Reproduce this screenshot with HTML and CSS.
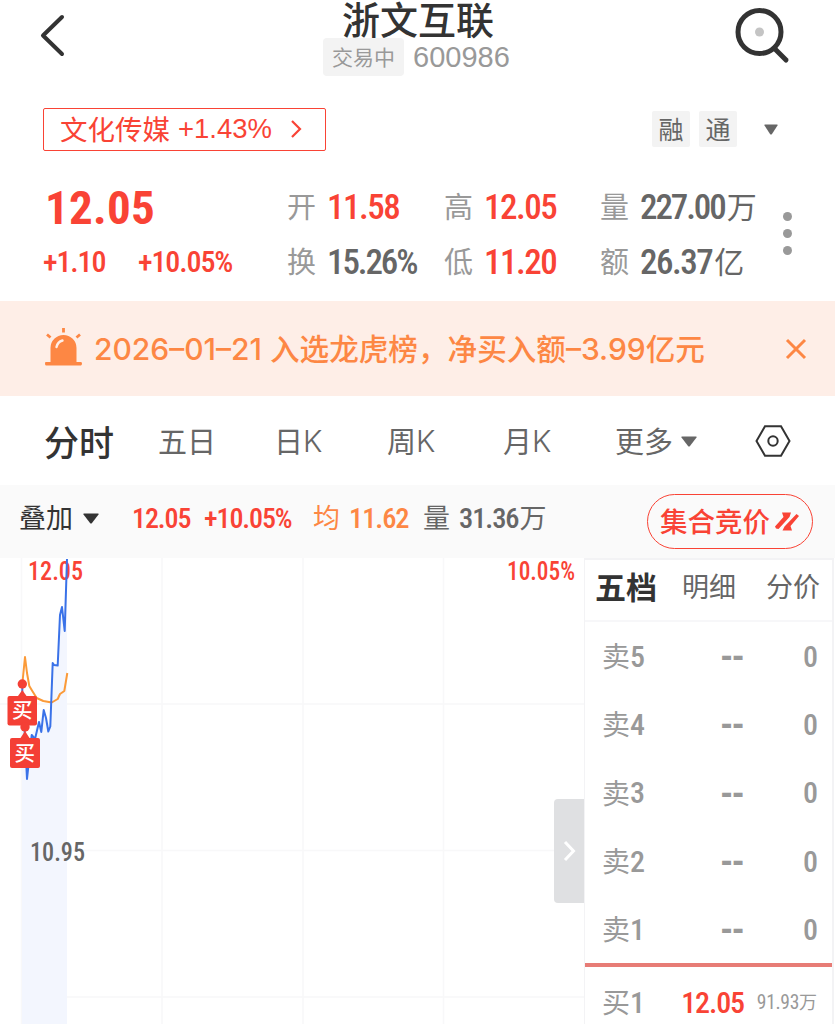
FILE: index.html
```html
<!DOCTYPE html>
<html lang="zh-CN">
<head>
  <meta charset="UTF-8">
  <title>浙文互联 600986</title>
  <meta name="viewport" content="width=device-width, initial-scale=1">
  <link rel="stylesheet" href="styles.css">
</head>
<body>
  <header class="header">
    <svg class="back" width="28" height="44" viewBox="0 0 28 44"><path d="M23 4 4 22.500 23 41" /></svg>
    <div class="title-box">
      <h1 class="title">浙文互联</h1>
      <div class="sub"><span class="state">交易中</span><span class="code">600986</span></div>
    </div>
    <svg class="search" width="58" height="58" viewBox="0 0 58 58">
      <circle class="ring" cx="25.500" cy="26" r="21.500" />
      <path class="ring" d="M41 43 52 54" />
      <circle class="dot" cx="25.500" cy="26" r="4.500" />
    </svg>
  </header>

  <div class="tag-row">
    <a class="sector"><span class="sector-name">文化传媒</span><span class="sector-num">+1.43%</span>
      <svg width="12" height="20" viewBox="0 0 12 20"><path d="M2 2 10 10 2 18" /></svg>
    </a>
    <span class="mark">融</span>
    <span class="mark">通</span>
    <svg class="tri" width="14" height="11" viewBox="0 0 14 11"><path d="M1 .500H13Q14 .500 13.500 1.500L8 10Q7 11 6 10L.500 1.500Q0 .500 1 .500Z" /></svg>
  </div>

  <!-- 行情数据 -->
  <section class="quote">
    <div class="price num red">12.05</div>
    <div class="cell"><span class="label">开</span><b class="num red">11.58</b></div>
    <div class="cell"><span class="label">高</span><b class="num red">12.05</b></div>
    <div class="cell"><span class="label">量</span><b class="num tight">227.00</b><span class="unit">万</span></div>
    <div class="change"><span class="num red">+1.10</span><span class="num red">+10.05%</span></div>
    <div class="cell"><span class="label">换</span><b class="num tight">15.26%</b></div>
    <div class="cell"><span class="label">低</span><b class="num red">11.20</b></div>
    <div class="cell"><span class="label">额</span><b class="num">26.37</b><span class="unit">亿</span></div>
    <div class="dots"><i></i><i></i><i></i></div>
  </section>

  <div class="notice">
    <svg class="alarm" width="37" height="39" viewBox="0 0 37 39">
      <path class="lamp" d="M5.500 34V20a13 13 0 0 1 26 0v14H36q1 0 1 1.500T36 37.500H1Q0 37.500 0 35.500T1 34Z" />
      <path class="ray" d="M18.500 0v4.500M2 6.500 5.500 9.500M35 6.500 31.500 9.500" />
      <path class="shine" d="M11.500 19q1-5 6-6.500" />
    </svg>
    <span class="notice-text"><span class="lat">2026–01–21 </span>入选龙虎榜，净买入额<span class="lat">–3.99</span>亿元</span>
    <svg class="close" width="22" height="22" viewBox="0 0 22 22"><path d="M2 2 20 20M20 2 2 20" /></svg>
  </div>

  <nav class="tabs">
    <span class="active">分时</span>
    <span>五日</span>
    <span>日<i>K</i></span>
    <span>周<i>K</i></span>
    <span>月<i>K</i></span>
    <span>更多<svg class="tri" width="16" height="11" viewBox="0 0 16 11"><path d="M1 .500H15Q16 .500 15.500 1.500L9 10Q8 11 7 10L.500 1.500Q0 .500 1 .500Z" /></svg></span>
    <svg class="setting" width="36" height="32" viewBox="0 0 36 32"><path d="M10 1.200H26L34.500 16 26 30.800H10L1.500 16Z" /><circle cx="18" cy="16" r="4.700" /></svg>
  </nav>

  <div class="info-bar">
    <span class="overlay">叠加</span>
    <svg class="tri dark" width="16" height="11" viewBox="0 0 16 11"><path d="M1 .500H15Q16 .500 15.500 1.500L9 10Q8 11 7 10L.500 1.500Q0 .500 1 .500Z" /></svg>
    <span class="num red now">12.05</span>
    <span class="num red pct">+10.05%</span>
    <span class="avg">均</span><span class="num avg-num">11.62</span>
    <span class="vol">量</span><span class="num vol-num">31.36</span><span class="vol-unit">万</span>
    <a class="auction"><span>集合竞价</span>
      <svg width="24" height="20" viewBox="0 0 24 20"><path class="z" d="M7 .500H16L14.500 5 3.500 17 1 16.500 0 14.500 8.500 5Z" /><path class="z" d="M21.500 2 24 4 15.500 14 17 18.500H7.500L9.500 14.500Z" /></svg>
    </a>
  </div>

  <main class="main">
    <div class="chart">
      <svg class="plot" width="584" height="466" viewBox="0 558 584 466">
        <path class="grid" d="M21.500 558V1024M162 558V1024M303 558V1024M443.500 558V1024M0 704H584M21 850.500H584M21 997H584" />
        <path class="area" d="M22 688 27 779 31.700 735 39 722 43.700 710 50 727 52.700 663 57.700 665 60 615 62 607 64.700 631 67 559V1024H22Z" />
        <path class="avg-line" d="M22.300 684 25 657 27 673 29.300 686 32.300 691 36.700 698 43.300 701 51.700 702.500 57.700 699 60 694 64.300 691 67.300 673" />
        <text class="tick red" x="28" y="580" textLength="55" lengthAdjust="spacingAndGlyphs">12.05</text>
        <text class="tick red" x="507" y="580" textLength="68" lengthAdjust="spacingAndGlyphs">10.05%</text>
        <text class="tick" x="30" y="860.500" textLength="55" lengthAdjust="spacingAndGlyphs">10.95</text>
        <path class="price-line" d="M22.300 685V700L24.700 732 27 779 31.700 735 35 739 39 722 41.300 732 43.700 710 46 718 48.300 731.500 50.300 726.500 52.700 663 54 665 57.700 665.500 60 615 62 607 64.700 631 67 559" />
        <g class="buy">
          <circle cx="22.300" cy="684" r="4.700" />
          <path d="M18 696 22.300 690 26.500 696Z" />
          <rect x="7.500" y="696" width="29.500" height="29.500" rx="2" />
          <circle cx="25" cy="727" r="4.700" />
          <path d="M20.500 738 25 731 29.500 738Z" />
          <rect x="10" y="738" width="30" height="30" rx="2" />
          <text x="12" y="718">买</text>
          <text x="14.500" y="760.500">买</text>
        </g>
      </svg>
      <div class="toggle"><svg width="13" height="22" viewBox="0 0 13 22"><path d="M2 2 10.500 11 2 20" /></svg></div>
    </div>

    <!-- 五档盘口 -->
    <aside class="book">
      <div class="book-tabs"><b>五档</b><span>明细</span><span>分价</span></div>
      <div class="row"><span>卖<i class="num">5</i></span><b class="none">--</b><b class="num qty">0</b></div>
      <div class="row"><span>卖<i class="num">4</i></span><b class="none">--</b><b class="num qty">0</b></div>
      <div class="row"><span>卖<i class="num">3</i></span><b class="none">--</b><b class="num qty">0</b></div>
      <div class="row"><span>卖<i class="num">2</i></span><b class="none">--</b><b class="num qty">0</b></div>
      <div class="row"><span>卖<i class="num">1</i></span><b class="none">--</b><b class="num qty">0</b></div>
      <div class="row bid"><span>买<i class="num">1</i></span><b class="num red">12.05</b><span class="small"><i class="num">91.93</i>万</span></div>
    </aside>
  </main>
</body>
</html>
```

FILE: styles.css
```css
* {
  box-sizing: border-box;
}
body {
  margin: 0;
  width: 835px;
  height: 1024px;
  overflow: hidden;
  background: #fff;
  font-family: "Noto Sans CJK SC", sans-serif;
  color: #666;
}
svg {
  display: block;
  flex: none;
}
i {
  font-style: normal;
}
.num {
  font-family: "Roboto Condensed", Roboto, sans-serif;
  font-weight: 500;
  letter-spacing: -1.1px;
}
.red {
  color: #f94335;
}
.tri {
  fill: #666;
}
.tri.dark {
  fill: #333;
}

/* header */
.header {
  height: 88px;
  display: flex;
  justify-content: space-between;
  align-items: flex-start;
  padding: 0 43px 0 39px;
}
.back {
  margin-top: 13px;
  fill: none;
  stroke: #333;
  stroke-width: 4;
  stroke-linecap: round;
  stroke-linejoin: round;
}
.title-box {
  width: 190px;
  margin-left: 35px;
}
.title {
  margin: 0;
  height: 38px;
  line-height: 36px;
  font-size: 38px;
  font-weight: 500;
  color: #333;
  text-align: center;
}
.sub {
  display: flex;
  align-items: center;
  height: 38px;
}
.state {
  width: 81px;
  height: 38px;
  line-height: 36px;
  border-radius: 4px;
  background: #f3f3f3;
  color: #999;
  font-size: 21px;
  text-align: center;
}
.code {
  margin-left: 9px;
  font-family: "Liberation Sans", sans-serif;
  font-size: 29px;
  color: #999;
}
.search {
  margin-top: 6px;
}
.search .ring {
  fill: none;
  stroke: #333;
  stroke-width: 5;
  stroke-linecap: round;
}
.search .dot {
  fill: #c4c4c4;
}

/* sector and marks */
.tag-row {
  display: flex;
  align-items: center;
  height: 82px;
  padding: 0 57px 0 43px;
}
.sector {
  display: flex;
  align-items: center;
  width: 283px;
  height: 43px;
  margin-right: auto;
  padding-left: 16px;
  border: 1.5px solid #f94335;
  border-radius: 2px;
  color: #f94335;
  font-size: 27.500px;
}
.sector-name {
  padding-bottom: 3px;
}
.sector-num {
  margin-left: 8px;
  font-family: "Liberation Sans", sans-serif;
  font-size: 27.500px;
}
.sector svg {
  margin-left: 18px;
  fill: none;
  stroke: #f94335;
  stroke-width: 2.2;
}
.mark {
  width: 38px;
  height: 36px;
  margin-right: 9px;
  line-height: 35px;
  background: #f3f3f3;
  border-radius: 2px;
  font-size: 25px;
  text-align: center;
}
.tag-row .tri {
  margin-left: 18px;
}

/* quote */
.quote {
  display: grid;
  grid-template-columns: 243px 157px 156px 178px 20px;
  grid-template-rows: 55px 55px;
  align-items: center;
  height: 131px;
  padding: 9px 0 0 43px;
}
.price {
  padding: 2px 0 0 2px;
  font-size: 47px;
  font-weight: 700;
  letter-spacing: .3px;
}
.change {
  display: flex;
  font-size: 30px;
}
.change .num {
  letter-spacing: -1.1px;
}
.change .num:first-child {
  width: 95px;
}
.cell {
  display: flex;
  align-items: center;
  padding-left: 1px;
  font-size: 35px;
}
.cell .num {
  padding-top: 1px;
  letter-spacing: -1.5px;
}
.cell .tight {
  letter-spacing: -2.1px;
}
.label {
  width: 40px;
  padding-bottom: 3px;
  font-size: 29px;
  color: #999;
}
.unit {
  margin-left: 2px;
  padding-bottom: 3px;
  font-size: 30px;
}
.dots {
  grid-column: 5;
  grid-row: 1 / 3;
  display: flex;
  flex-direction: column;
  align-items: center;
  gap: 8px;
  padding-bottom: 2px;
}
.dots i {
  width: 9px;
  height: 9px;
  border-radius: 50%;
  background: #999;
}

/* notice */
.notice {
  display: flex;
  align-items: center;
  height: 95px;
  padding: 0 28px 0 45px;
  background: #feeee7;
  color: #fd8744;
}
.alarm {
  margin-bottom: 2px;
}
.notice-text {
  margin-left: 12px;
  padding-bottom: 2px;
  font-size: 29.600px;
  font-weight: 500;
  white-space: pre;
}
.lat {
  font-family: Inter, sans-serif;
  font-size: 30px;
}
.lamp {
  fill: #fd8744;
}
.ray {
  fill: none;
  stroke: #fd8744;
  stroke-width: 2.800;
}
.shine {
  fill: none;
  stroke: #feeee7;
  stroke-width: 2.400;
  stroke-linecap: round;
}
.close {
  margin-left: auto;
  fill: none;
  stroke: #fd8744;
  stroke-width: 3;
}

/* period tabs */
.tabs {
  display: grid;
  grid-template-columns: 114px 116px 113px 116px 112px 140px 36px;
  align-items: center;
  height: 89px;
  padding-left: 44px;
  font-size: 29px;
}
.tabs span {
  display: flex;
  align-items: center;
  padding-bottom: 1px;
}
.tabs i {
  padding-top: 2px;
  font-family: Inter, sans-serif;
  font-size: 30px;
  font-weight: 300;
}
.tabs .active {
  font-size: 35px;
  font-weight: 500;
  color: #333;
}
.tabs .tri {
  margin: 3px 0 0 8px;
}
.setting {
  fill: none;
  stroke: #333;
  stroke-width: 2;
}

/* overlay bar */
.info-bar {
  display: flex;
  align-items: center;
  height: 73px;
  padding: 0 22px 7px 19px;
  background: #fafafa;
  font-size: 27px;
}
.overlay {
  width: 64px;
  padding-bottom: 3px;
  color: #333;
}
.now {
  width: 72px;
  margin-left: 33px;
  font-size: 28px;
}
.pct {
  width: 109px;
  font-size: 28px;
}
.avg {
  width: 36px;
  padding-bottom: 3px;
  color: #fd8744;
}
.avg-num {
  width: 74px;
  color: #fd8744;
  font-size: 28.500px;
}
.vol {
  width: 36px;
  padding-bottom: 3px;
}
.vol-num {
  font-size: 28.500px;
}
.vol-unit {
  padding: 0 0 3px 1px;
}
.auction {
  display: flex;
  align-items: center;
  width: 166px;
  height: 55px;
  margin: 7px 0 0 auto;
  padding-left: 12px;
  border: 1.5px solid #f94335;
  border-radius: 28px;
  color: #f94335;
  font-size: 27.500px;
  font-weight: 500;
}
.auction span {
  padding-bottom: 3px;
}
.auction svg {
  margin-left: 5px;
}
.auction .z {
  fill: #f94335;
}

/* chart and order book */
.main {
  display: flex;
  height: 466px;
}
.chart {
  position: relative;
  width: 584px;
}
.plot {
  overflow: visible;
}
.grid {
  fill: none;
  stroke: #f8f8f9;
  stroke-width: 1.500;
}
.area {
  fill: #f3f6fe;
}
.price-line {
  fill: none;
  stroke: #3a72e8;
  stroke-width: 2;
  stroke-linejoin: round;
}
.avg-line {
  fill: none;
  stroke: #fb9a38;
  stroke-width: 2;
  stroke-linejoin: round;
}
.tick {
  font-family: "Roboto Condensed", Roboto, sans-serif;
  font-size: 25.500px;
  font-weight: 500;
  fill: #666;
}
.tick.red {
  fill: #f94335;
}
.buy {
  fill: #f43f35;
}
.buy text {
  fill: #fff;
  font-size: 20.500px;
  font-weight: 500;
}
.toggle {
  position: absolute;
  right: 0;
  top: 241px;
  display: flex;
  align-items: center;
  justify-content: center;
  width: 30px;
  height: 104px;
  border-radius: 4px 0 0 4px;
  background: #dfe0e2;
}
.toggle path {
  fill: none;
  stroke: #fff;
  stroke-width: 3;
}
.book {
  width: 250px;
  border: 2px solid #f3f3f5;
  border-width: 2px 2px 0 1px;
}
.book-tabs {
  display: flex;
  align-items: center;
  height: 62px;
  padding: 0 0 9px 10px;
  border-bottom: 2px solid #f7f7f9;
  font-size: 27px;
}
.book-tabs b {
  flex: none;
  width: 87px;
  font-size: 31px;
  font-weight: 700;
  color: #333;
}
.book-tabs span {
  flex: none;
  width: 84px;
}
.row {
  display: grid;
  grid-template-columns: 79px 63px 1fr;
  align-items: center;
  height: 68.300px;
  padding: 0 15px 2px 17px;
  color: #999;
  font-size: 28px;
}
.row > span:first-child {
  display: flex;
  align-items: center;
}
.row .num {
  padding-top: 2px;
  font-size: 30px;
}
.row b {
  text-align: right;
}
.row .none {
  font-family: "Liberation Sans", sans-serif;
  font-size: 35px;
}
.bid {
  height: 76px;
  padding-bottom: 4px;
  border-top: 4px solid #e77c76;
}
.row .small {
  display: flex;
  align-items: center;
  justify-content: flex-end;
  font-size: 18px;
}
.row .small .num {
  font-size: 19.500px;
  font-weight: 400;
  letter-spacing: -.3px;
}
```
